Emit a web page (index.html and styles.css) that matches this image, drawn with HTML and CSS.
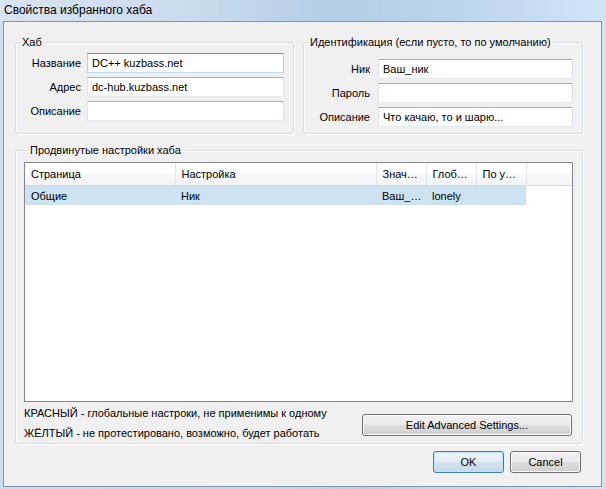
FILE: index.html
```html
<!DOCTYPE html>
<html lang="ru">
<head>
  <meta charset="UTF-8">
  <title>Свойства избранного хаба</title>
  <link rel="stylesheet" href="styles.css">
</head>
<body>
  <div class="window">
    <div class="titlebar">Свойства избранного хаба</div>
    <div class="client">
      <div class="top-row">
        <fieldset class="group group-hub">
          <legend>Хаб</legend>
          <div class="form-grid">
            <label for="hub-name">Название</label>
            <input type="text" id="hub-name" class="focused" value="DC++ kuzbass.net">
            <label for="hub-addr">Адрес</label>
            <input type="text" id="hub-addr" value="dc-hub.kuzbass.net">
            <label for="hub-desc">Описание</label>
            <input type="text" id="hub-desc" value="">
          </div>
        </fieldset>

        <fieldset class="group group-ident">
          <legend>Идентификация (если пусто, то по умолчанию)</legend>
          <div class="form-grid">
            <label for="nick">Ник</label>
            <input type="text" id="nick" value="Ваш_ник">
            <label for="pass">Пароль</label>
            <input type="text" id="pass" value="">
            <label for="user-desc">Описание</label>
            <input type="text" id="user-desc" value="Что качаю, то и шарю...">
          </div>
        </fieldset>
      </div>

      <fieldset class="group group-adv">
        <legend>Продвинутые настройки хаба</legend>
        <div class="listview">
          <table>
            <colgroup>
              <col style="width: 150px">
              <col style="width: 201px">
              <col style="width: 50px">
              <col style="width: 50px">
              <col style="width: 50px">
              <col>
            </colgroup>
            <thead>
              <tr>
                <th>Страница</th>
                <th>Настройка</th>
                <th title="Значение">Знач…</th>
                <th title="Глобально">Глоб…</th>
                <th title="По умолчанию">По у…</th>
                <th class="filler"></th>
              </tr>
            </thead>
            <tbody>
              <tr class="selected">
                <td>Общие</td>
                <td>Ник</td>
                <td title="Ваш_ник">Ваш_…</td>
                <td>lonely</td>
                <td></td>
                <td class="filler"></td>
              </tr>
            </tbody>
          </table>
        </div>

        <div class="adv-footer">
          <div class="notes">
            <div>КРАСНЫЙ - глобальные настроки, не применимы к одному</div>
            <div>ЖЁЛТЫЙ - не протестировано, возможно, будет работать</div>
          </div>
          <button class="btn btn-edit">Edit Advanced Settings...</button>
        </div>
      </fieldset>

      <div class="dialog-buttons">
        <button class="btn btn-default">OK</button>
        <button class="btn">Cancel</button>
      </div>
    </div>
  </div>
</body>
</html>
```

FILE: styles.css
```css
body {
  margin: 0;
  background: #c2d7ed;
  font-family: "Liberation Sans", Arial, sans-serif;
  font-size: 11px;
  color: #000;
}

.window {
  width: 606px;
  height: 489px;
  background: linear-gradient(90deg, #cddcec 0%, #c3d7ec 40%, #b8d1eb 60%, #c8ddf3 85%, #d2e5f8 100%);
}

.titlebar {
  height: 21px;
  line-height: 20px;
  padding-left: 4px;
  font-size: 12px;
  background: linear-gradient(90deg, #d8e4f0 0%, #cbdcee 30%, #b4cde8 55%, #bcd4ee 75%, #d0e4f8 100%);
}

.client {
  margin-left: 3px;
  width: 599px;
  height: 466px;
  box-sizing: border-box;
  border: 1px solid #8396ab;
  background: #f0f0f0;
  padding: 13px 18px 0 11px;
}

/* group boxes */
.group {
  margin: 0;
  padding: 0;
  min-width: 0;
  box-sizing: border-box;
  border: 1px solid #d5dfe5;
  border-radius: 3px;
  box-shadow: inset 1px 1px 0 #fff, 1px 1px 0 #fff;
}

.group legend {
  margin-left: 4px;
  padding: 0 2px;
  line-height: 15px;
}

.top-row {
  display: flex;
  gap: 9px;
}

.group-hub {
  width: 279px;
  height: 99px;
  padding-top: 3px;
}

.group-ident {
  width: 280px;
  height: 99px;
  padding-top: 9px;
}

.form-grid {
  display: grid;
  grid-template-columns: 65px 197px;
  grid-auto-rows: 20px;
  column-gap: 6px;
  row-gap: 4px;
  align-items: center;
}

.group-ident .form-grid {
  grid-template-columns: 66px 195px;
  column-gap: 8px;
}

.form-grid label {
  text-align: right;
  white-space: nowrap;
}

.form-grid input {
  height: 20px;
  margin: 0;
  box-sizing: border-box;
  border: 1px solid;
  border-color: #abadb3 #dbdfe6 #e3e9ef #e2e3ea;
  padding: 0 4px;
  background: #fff;
  font: inherit;
  color: #000;
  outline: none;
}

.form-grid input.focused {
  border-color: #5593d1 #b5cfe7 #c0d8ee #b5cfe7;
}

/* advanced settings */
.group-adv {
  width: 568px;
  margin-top: 9px;
  padding: 4px 9px 0 8px;
}

.listview {
  height: 240px;
  box-sizing: border-box;
  border: 1px solid #828790;
  background: #fff;
  overflow: hidden;
}

.listview table {
  width: 547px;
  border-collapse: collapse;
  table-layout: fixed;
}

.listview th {
  height: 22px;
  padding: 0 0 0 6px;
  text-align: left;
  font-weight: normal;
  background: linear-gradient(#ffffff 0%, #ffffff 45%, #f6f7f9 55%, #f3f4f6 100%);
  border-right: 1px solid #e3e5e8;
  border-bottom: 1px solid #d8dbe0;
  white-space: nowrap;
}

.listview th.filler {
  border-right: none;
}

.listview td {
  height: 19px;
  padding: 0 0 0 6px;
  white-space: nowrap;
}

.listview tr.selected td {
  background: #cde3f1;
}

.listview tr.selected td.filler {
  background: none;
}

.adv-footer {
  display: flex;
  justify-content: space-between;
  align-items: flex-start;
  padding-right: 1px;
}

.notes {
  margin-top: 1px;
  line-height: 20px;
}

/* buttons */
.btn {
  height: 22px;
  width: 71px;
  margin: 0;
  padding: 0;
  border: 1px solid #707070;
  border-radius: 3px;
  background: linear-gradient(#f2f2f2 0%, #ebebeb 48%, #dddddd 52%, #cfcfcf 100%);
  box-shadow: inset 0 0 0 1px #fbfbfb;
  font: inherit;
  color: #000;
}

.btn-edit {
  width: 210px;
  margin-top: 12px;
}

.btn-default {
  border-color: #3c7fb1;
  background: linear-gradient(#eef4f9 0%, #e4edf4 48%, #d3e2ee 52%, #c6d8e8 100%);
  box-shadow: inset 0 0 0 1px #bfe3f7;
}

.dialog-buttons {
  display: flex;
  justify-content: flex-end;
  gap: 6px;
  margin-top: 7px;
  padding-right: 2px;
}
```
